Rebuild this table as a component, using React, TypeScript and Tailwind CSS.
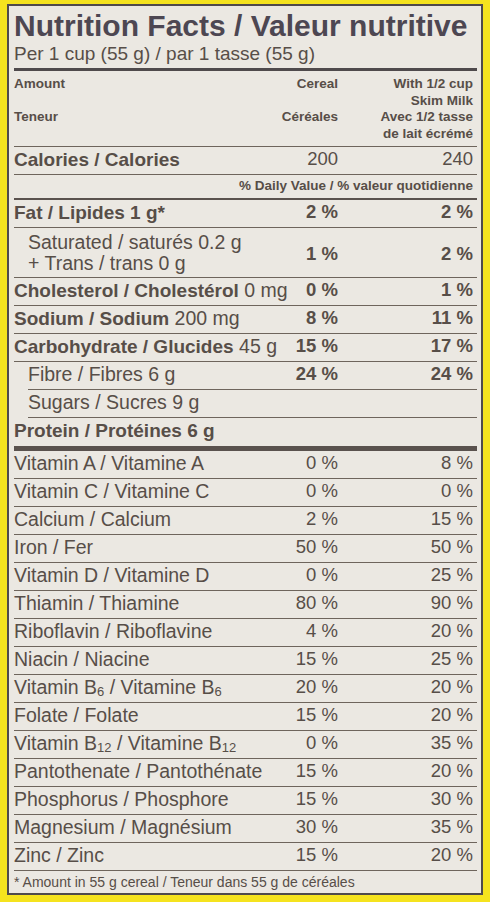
import React from "react";

type RowProps = {
  label: React.ReactNode;
  cereal?: string;
  milk?: string;
  boldValues?: boolean;
  indent?: boolean;
  className?: string;
};

function Row({ label, cereal, milk, boldValues, indent, className }: RowProps) {
  return (
    <div
      className={
        "flex items-center border-b border-[#6e655c] pr-[4px] text-[18.5px] " +
        (indent ? "ml-[14px] " : "") +
        (className ?? "h-[28px] pb-[3px] leading-[24px]")
      }
    >
      <div className="flex-1 whitespace-nowrap text-[19.5px]">{label}</div>
      <div className={"text-right whitespace-nowrap " + (boldValues ? "font-bold" : "")}>
        {cereal}
      </div>
      <div className={"w-[135px] text-right whitespace-nowrap " + (boldValues ? "font-bold" : "")}>
        {milk}
      </div>
    </div>
  );
}

const vitamins: { label: React.ReactNode; cereal: string; milk: string }[] = [
  { label: "Vitamin A / Vitamine A", cereal: "0 %", milk: "8 %" },
  { label: "Vitamin C / Vitamine C", cereal: "0 %", milk: "0 %" },
  { label: "Calcium / Calcium", cereal: "2 %", milk: "15 %" },
  { label: "Iron / Fer", cereal: "50 %", milk: "50 %" },
  { label: "Vitamin D / Vitamine D", cereal: "0 %", milk: "25 %" },
  { label: "Thiamin / Thiamine", cereal: "80 %", milk: "90 %" },
  { label: "Riboflavin / Riboflavine", cereal: "4 %", milk: "20 %" },
  { label: "Niacin / Niacine", cereal: "15 %", milk: "25 %" },
  {
    label: (
      <>
        Vitamin B<sub className="bottom-[-0.15em] text-[13px]">6</sub> / Vitamine B
        <sub className="bottom-[-0.15em] text-[13px]">6</sub>
      </>
    ),
    cereal: "20 %",
    milk: "20 %",
  },
  { label: "Folate / Folate", cereal: "15 %", milk: "20 %" },
  {
    label: (
      <>
        Vitamin B<sub className="bottom-[-0.15em] text-[13px]">12</sub> / Vitamine B
        <sub className="bottom-[-0.15em] text-[13px]">12</sub>
      </>
    ),
    cereal: "0 %",
    milk: "35 %",
  },
  { label: "Pantothenate / Pantothénate", cereal: "15 %", milk: "20 %" },
  { label: "Phosphorus / Phosphore", cereal: "15 %", milk: "30 %" },
  { label: "Magnesium / Magnésium", cereal: "30 %", milk: "35 %" },
  { label: "Zinc / Zinc", cereal: "15 %", milk: "20 %" },
];

export default function App() {
  return (
    <div
      className="h-[902px] w-[490px] bg-[#f5e31e] pb-[7px] pl-[7px] pr-[7px] pt-[4px] text-[#574e48]"
      style={{ fontFamily: '"Liberation Sans", Arial, sans-serif' }}
    >
      <div className="h-[891px] w-[476px] border-2 border-[#4f4a4c] bg-[#ebe8e2] pl-[5px] pr-[4px] pt-[5px]">
        <h1 className="whitespace-nowrap text-[30px] font-bold leading-[30px] text-[#4d4752]">
          Nutrition Facts / Valeur nutritive
        </h1>
        <p className="mt-[3px] whitespace-nowrap text-[19px] leading-[19px]">
          Per 1 cup (55 g) / par 1 tasse (55 g)
        </p>

        <div className="mt-[5px] h-[3px] bg-[#4f4a4c]" />

        {/* header */}
        <div className="flex border-b border-[#6e655c] pb-[4px] pr-[4px] pt-[5px] text-[13.5px] font-bold leading-[16.5px]">
          <div className="flex-1">
            <div>Amount</div>
            <div>&nbsp;</div>
            <div>Teneur</div>
            <div>&nbsp;</div>
          </div>
          <div className="text-right">
            <div>Cereal</div>
            <div>&nbsp;</div>
            <div>Céréales</div>
            <div>&nbsp;</div>
          </div>
          <div className="w-[135px] text-right">
            <div>With 1/2 cup</div>
            <div>Skim Milk</div>
            <div>Avec 1/2 tasse</div>
            <div>de lait écrémé</div>
          </div>
        </div>

        <Row
          label={<span className="text-[19px] font-bold">Calories / Calories</span>}
          cereal="200"
          milk="240"
        />

        <div className="flex h-[25px] items-center justify-end border-b-2 border-[#5a524e] pr-[4px] text-[13.5px] font-bold">
          % Daily Value / % valeur quotidienne
        </div>

        <Row
          label={<span className="text-[19px] font-bold">Fat / Lipides 1 g*</span>}
          cereal="2 %"
          milk="2 %"
          boldValues
        />
        <Row
          className="h-[50px] pt-[1px] leading-[21px]"
          label={
            <div className="pl-[14px]">
              <div>Saturated / saturés 0.2 g</div>
              <div>+ Trans / trans 0 g</div>
            </div>
          }
          cereal="1 %"
          milk="2 %"
          boldValues
        />
        <Row
          label={
            <>
              <span className="text-[19px] font-bold">Cholesterol / Cholestérol</span> 0 mg
            </>
          }
          cereal="0 %"
          milk="1 %"
          boldValues
        />
        <Row
          label={
            <>
              <span className="text-[19px] font-bold">Sodium / Sodium</span> 200 mg
            </>
          }
          cereal="8 %"
          milk="11 %"
          boldValues
        />
        <Row
          label={
            <>
              <span className="text-[19px] font-bold">Carbohydrate / Glucides</span> 45 g
            </>
          }
          cereal="15 %"
          milk="17 %"
          boldValues
        />
        <Row indent label="Fibre / Fibres 6 g" cereal="24 %" milk="24 %" boldValues />
        <Row indent label="Sugars / Sucres 9 g" />
        <div className="flex h-[28px] items-center pb-[3px] text-[19px] font-bold leading-[24px]">
          Protein / Protéines 6 g
        </div>

        <div className="h-[5px] bg-[#5a524e]" />

        {vitamins.map((v, i) => (
          <Row key={i} label={v.label} cereal={v.cereal} milk={v.milk} />
        ))}

        <p className="whitespace-nowrap pt-[2px] text-[14px] leading-[18px]">
          * Amount in 55 g cereal / Teneur dans 55 g de céréales
        </p>
      </div>
    </div>
  );
}
